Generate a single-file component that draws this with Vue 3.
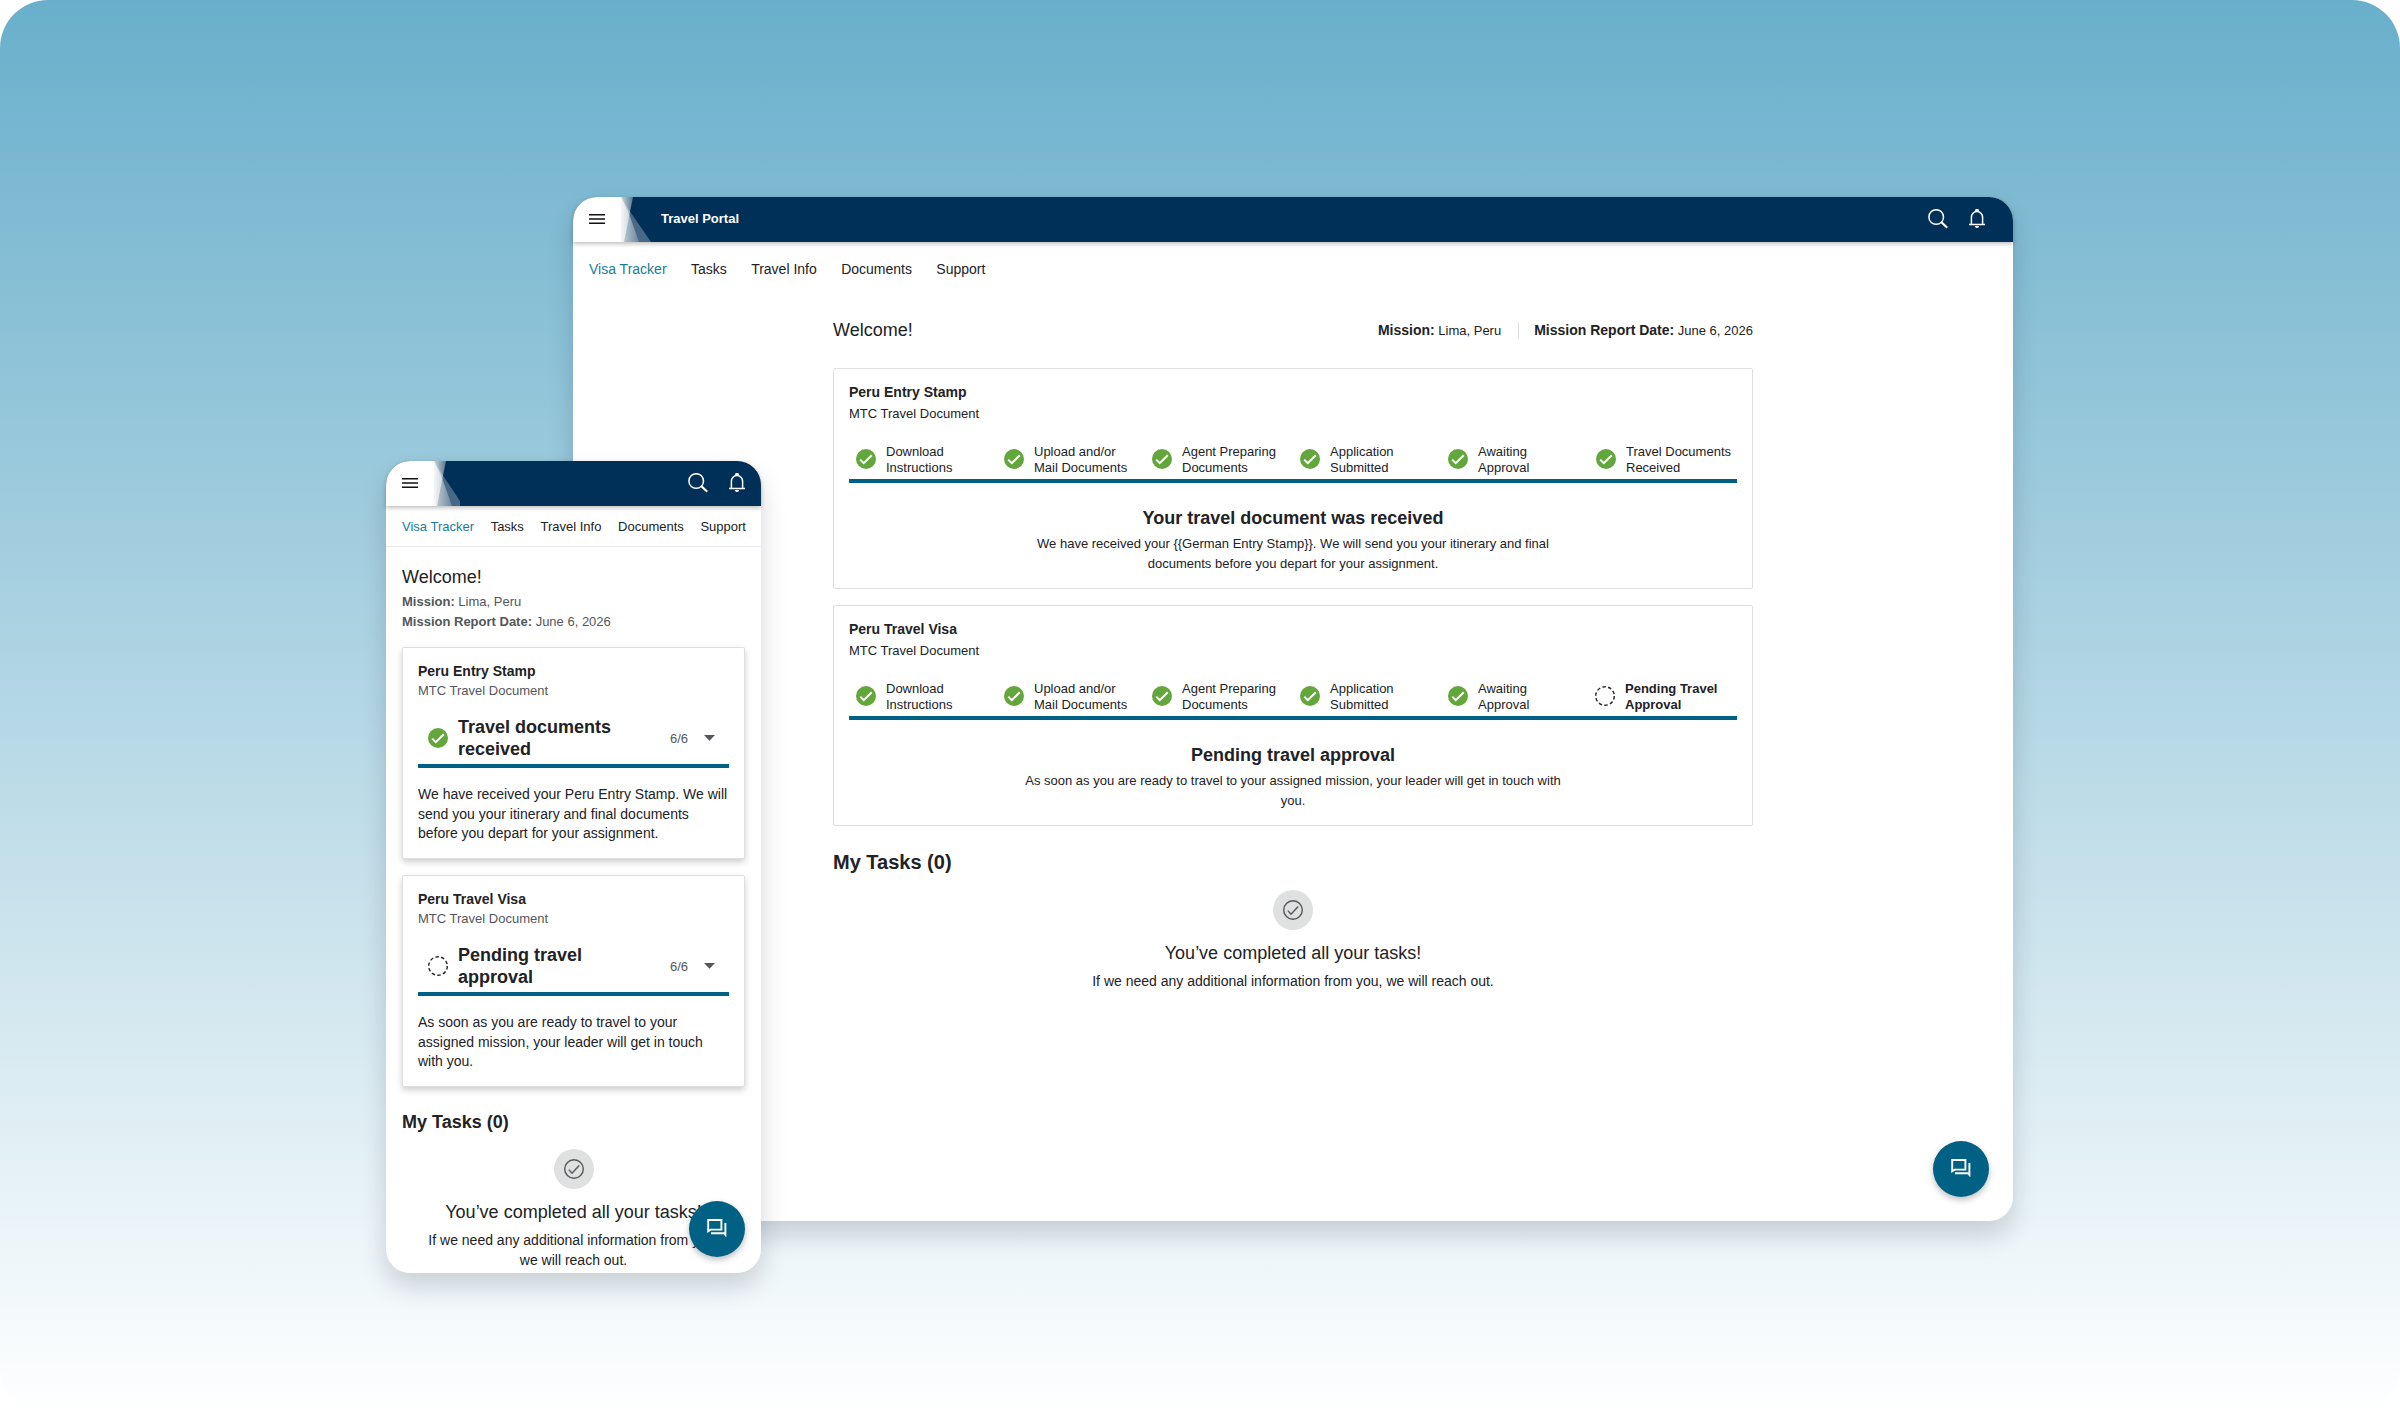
<template>
  <div class="stage">
    <section class="window desktop">
      <header class="topbar">
        <div class="menu"><svg viewBox="0 0 16 10"><path d="M0 .8h16M0 5h16M0 9.2h16" /></svg></div>
        <svg class="glare" viewBox="0 0 30 45">
          <defs>
            <linearGradient id="glare-near"><stop offset="0" stop-color="#fff" stop-opacity=".8" /><stop offset="1" stop-color="#fff" stop-opacity=".35" /></linearGradient>
            <linearGradient id="glare-mid"><stop offset="0" stop-color="#fff" stop-opacity=".7" /><stop offset="1" stop-color="#fff" stop-opacity=".2" /></linearGradient>
          </defs>
          <path d="M0 0h12L3 45H0z" fill="url(#glare-near)" />
          <path d="M0 0l7 14 11 31H0z" fill="url(#glare-mid)" />
          <path d="M0 0l8 13 22 32H0z" fill="#fff" opacity=".28" />
        </svg>
        <strong class="brand">Travel Portal</strong>
        <div class="actions">
          <svg class="search" viewBox="0 0 20 20"><circle cx="8.2" cy="8" r="7.3" /><path class="handle" d="M13.2 13l6 5.8" /></svg>
          <svg class="bell" viewBox="0 0 16 20"><path d="M0 15.5h16M2.4 15V8.2a5.6 5.6 0 0 1 11.2 0V15" /><path class="solid" d="M8 0a1.5 1.5 0 0 1 1.5 2.5h-3A1.5 1.5 0 0 1 8 0zM5.8 17h4.4a2.2 2 0 0 1-4.4 0z" /></svg>
        </div>
      </header>
      <nav class="nav">
        <a v-for="(item, i) in navItems" :key="item" :class="{ active: i === 0 }">{{ item }}</a>
      </nav>
      <main class="content">
        <div class="welcome-row">
          <h1 class="welcome">Welcome!</h1>
          <div class="facts">
            <span><b>Mission:</b> Lima, Peru</span>
            <span class="fact-last"><b>Mission Report Date:</b> June 6, 2026</span>
          </div>
        </div>
        <article v-for="doc in documents" :key="doc.name" class="card">
          <h2 class="card-title">{{ doc.name }}</h2>
          <p class="card-sub">MTC Travel Document</p>
          <ol class="steps">
            <li v-for="step in [...baseSteps, doc.lastStep]" :key="step[0]" :class="{ pending: doc.pending && step === doc.lastStep }">
              <svg class="status" viewBox="0 0 20 20">
                <circle v-if="doc.pending && step === doc.lastStep" class="dashed" cx="10" cy="10" r="9.3" />
                <template v-else>
                  <circle class="done" cx="10" cy="10" r="10" />
                  <path class="tick" d="M4.2 10.6l3.6 3.6 8-8" />
                </template>
              </svg>
              <span>{{ step[0] }}<br>{{ step[1] }}</span>
            </li>
          </ol>
          <h3 class="result">{{ doc.title }}</h3>
          <p class="message">{{ doc.message }}</p>
        </article>
        <h2 class="tasks-title">My Tasks (0)</h2>
        <div class="empty">
          <div class="empty-icon">
            <svg viewBox="0 0 20 20"><circle cx="10" cy="10" r="9.3" /><path d="M4.8 10.6l3.2 3.6 7.2-7.6" /></svg>
          </div>
          <p class="empty-title">You’ve completed all your tasks!</p>
          <p class="empty-text">If we need any additional information from you, we will reach out.</p>
        </div>
      </main>
      <button class="fab" aria-label="Chat">
        <svg viewBox="0 0 20 18"><path d="M1.2 1h13.2v9.6H3.6L1.2 12.2z" /><path d="M4 14.3h13.2l1.2 1.5V4" /></svg>
      </button>
    </section>

    <section class="window phone">
      <header class="topbar">
        <div class="menu"><svg viewBox="0 0 16 10"><path d="M0 .8h16M0 5h16M0 9.2h16" /></svg></div>
        <svg class="glare" viewBox="0 0 30 45">
          <path d="M0 0h12L3 45H0z" fill="url(#glare-near)" />
          <path d="M0 0l7 14 11 31H0z" fill="url(#glare-mid)" />
          <path d="M0 0l8 13 18 27v5H0z" fill="#fff" opacity=".28" />
        </svg>
        <div class="actions">
          <svg class="search" viewBox="0 0 20 20"><circle cx="8.2" cy="8" r="7.3" /><path class="handle" d="M13.2 13l6 5.8" /></svg>
          <svg class="bell" viewBox="0 0 16 20"><path d="M0 15.5h16M2.4 15V8.2a5.6 5.6 0 0 1 11.2 0V15" /><path class="solid" d="M8 0a1.5 1.5 0 0 1 1.5 2.5h-3A1.5 1.5 0 0 1 8 0zM5.8 17h4.4a2.2 2 0 0 1-4.4 0z" /></svg>
        </div>
      </header>
      <nav class="nav">
        <a v-for="(item, i) in navItems" :key="item" :class="{ active: i === 0 }">{{ item }}</a>
      </nav>
      <main class="content">
        <h1 class="welcome">Welcome!</h1>
        <div class="facts">
          <span><b>Mission:</b> Lima, Peru</span>
          <span><b>Mission Report Date:</b> June 6, 2026</span>
        </div>
        <article v-for="doc in documents" :key="doc.name" class="card">
          <h2 class="card-title">{{ doc.name }}</h2>
          <p class="card-sub">MTC Travel Document</p>
          <div class="current">
            <svg class="status" viewBox="0 0 20 20">
              <circle v-if="doc.pending" class="dashed" cx="10" cy="10" r="9.3" />
              <template v-else>
                <circle class="done" cx="10" cy="10" r="10" />
                <path class="tick" d="M4.2 10.6l3.6 3.6 8-8" />
              </template>
            </svg>
            <h3>{{ doc.shortTitle }}</h3>
            <span class="count">6/6</span>
            <svg class="caret" viewBox="0 0 11 6"><path d="M0 0h11L5.5 5.8z" /></svg>
          </div>
          <p class="message">{{ doc.shortMessage }}</p>
        </article>
        <h2 class="tasks-title">My Tasks (0)</h2>
        <div class="empty">
          <div class="empty-icon">
            <svg viewBox="0 0 20 20"><circle cx="10" cy="10" r="9.3" /><path d="M4.8 10.6l3.2 3.6 7.2-7.6" /></svg>
          </div>
          <p class="empty-title">You’ve completed all your tasks!</p>
          <p class="empty-text">If we need any additional information from you, we will reach out.</p>
        </div>
      </main>
      <button class="fab" aria-label="Chat">
        <svg viewBox="0 0 20 18"><path d="M1.2 1h13.2v9.6H3.6L1.2 12.2z" /><path d="M4 14.3h13.2l1.2 1.5V4" /></svg>
      </button>
    </section>
  </div>
</template>

<script setup>
const navItems = ['Visa Tracker', 'Tasks', 'Travel Info', 'Documents', 'Support'];

const baseSteps = [
  ['Download', 'Instructions'],
  ['Upload and/or', 'Mail Documents'],
  ['Agent Preparing', 'Documents'],
  ['Application', 'Submitted'],
  ['Awaiting', 'Approval'],
];

const documents = [
  {
    name: 'Peru Entry Stamp',
    lastStep: ['Travel Documents', 'Received'],
    pending: false,
    title: 'Your travel document was received',
    message: 'We have received your {{German Entry Stamp}}. We will send you your itinerary and final documents before you depart for your assignment.',
    shortTitle: 'Travel documents received',
    shortMessage: 'We have received your Peru Entry Stamp. We will send you your itinerary and final documents before you depart for your assignment.',
  },
  {
    name: 'Peru Travel Visa',
    lastStep: ['Pending Travel', 'Approval'],
    pending: true,
    title: 'Pending travel approval',
    message: 'As soon as you are ready to travel to your assigned mission, your leader will get in touch with you.',
    shortTitle: 'Pending travel approval',
    shortMessage: 'As soon as you are ready to travel to your assigned mission, your leader will get in touch with you.',
  },
];
</script>

<style>
body {
  margin: 0;
  background: #fff;
}
</style>

<style scoped>
.stage {
  position: relative;
  width: 2400px;
  height: 1417px;
  overflow: hidden;
  border-radius: 48px;
  background: linear-gradient(180deg, #69afcb 0%, #fff 100%);
  font-family: "Liberation Sans", Arial, sans-serif;
  color: #212225;
}

h1, h2, h3, p, ol {
  margin: 0;
  padding: 0;
}

svg {
  display: block;
  flex: none;
  fill: none;
}

.window {
  position: absolute;
  display: flex;
  flex-direction: column;
  background: #fff;
  border-radius: 24px;
  box-shadow: 0 14px 26px rgba(0, 15, 35, 0.16);
}

.desktop {
  left: 573px;
  top: 197px;
  width: 1440px;
  height: 1024px;
}

.phone {
  left: 386px;
  top: 461px;
  width: 375px;
  height: 812px;
}

/* top bar */
.topbar {
  display: flex;
  flex: none;
  align-items: center;
  height: 45px;
  overflow: hidden;
  background: #003057;
  border-radius: 24px 24px 0 0;
  box-shadow: 0 2px 4px rgba(0, 0, 0, 0.25);
}

.menu {
  box-sizing: border-box;
  display: flex;
  align-items: center;
  justify-content: center;
  width: 48px;
  height: 45px;
  padding-bottom: 1px;
  background: #fff;
}

.menu svg {
  width: 16px;
  height: 10px;
  stroke: #111;
  stroke-width: 1.5;
}

.glare {
  width: 30px;
  height: 45px;
}

.brand {
  margin-left: 10px;
  padding-bottom: 2px;
  color: #fff;
  font-size: 13px;
  line-height: 20px;
}

.actions {
  display: flex;
  align-items: center;
  gap: 21px;
  margin-left: auto;
  padding: 0 28px 1px 0;
}

.phone .actions {
  padding-right: 16px;
}

.actions svg {
  height: 20px;
  stroke: #fff;
  stroke-width: 1.5;
}

.search {
  width: 20px;
}

.bell {
  width: 16px;
}

.actions .handle {
  stroke-width: 2.2;
}

.actions .solid {
  fill: #fff;
  stroke: none;
}

/* navigation */
.nav {
  display: flex;
  flex: none;
  align-items: center;
  gap: 24.4px;
  height: 54px;
  padding: 0 16px;
  font-size: 14px;
}

.phone .nav {
  justify-content: space-between;
  gap: 0;
  height: 40px;
  padding-right: 15px;
  border-bottom: 1px solid #ececed;
  font-size: 13px;
}

.nav .active {
  color: #177c9c;
}

/* content */
.desktop .content {
  width: 920px;
  margin: 22px auto 0;
}

.phone .content {
  padding: 18px 16px 0;
}

.welcome-row {
  display: flex;
  align-items: center;
  justify-content: space-between;
  height: 24px;
  margin-bottom: 26px;
}

.welcome {
  font-size: 18px;
  font-weight: 400;
  line-height: 24px;
}

.facts {
  display: flex;
  font-size: 13px;
  line-height: 16px;
}

.desktop .facts b {
  font-size: 14px;
}

.fact-last {
  margin-left: 17px;
  padding-left: 15px;
  border-left: 1px solid #dedfdf;
}

.phone .facts {
  flex-direction: column;
  margin: 3px 0 15px;
  color: #53575b;
  line-height: 20px;
}

.card {
  box-sizing: border-box;
  height: 221px;
  margin-bottom: 16px;
  padding: 13px 15px 0;
  border: 1px solid #dedfdf;
  border-radius: 2px;
  background: #fff;
}

.phone .card {
  height: 212px;
  box-shadow: 0 3px 6px rgba(0, 0, 0, 0.2);
}

.card-title {
  font-size: 14px;
  line-height: 20px;
}

.card-sub {
  margin-top: 2px;
  font-size: 13px;
  line-height: 20px;
}

.phone .card-sub {
  margin-top: 0;
  color: #53575b;
}

.steps {
  display: grid;
  grid-template-columns: repeat(6, 148px);
  margin-top: 20px;
  padding-bottom: 3px;
  border-bottom: 4px solid #006184;
  list-style: none;
}

.steps li {
  display: flex;
  align-items: center;
  gap: 10px;
  padding-left: 7px;
  font-size: 13px;
  line-height: 16px;
  white-space: nowrap;
}

.steps .pending {
  padding-left: 6px;
  font-weight: 700;
}

.status {
  width: 20px;
  height: 20px;
}

.steps .status {
  margin-bottom: 2px;
}

.done {
  fill: #63a63c;
}

.tick {
  stroke: #fff;
  stroke-width: 2;
}

.dashed {
  stroke: #212225;
  stroke-width: 1.4;
  stroke-dasharray: 3.5 2.34;
}

.result {
  margin-top: 23px;
  font-size: 18px;
  line-height: 24px;
  text-align: center;
}

.message {
  width: 544px;
  margin: 4px auto 0;
  font-size: 13px;
  line-height: 20px;
  text-align: center;
}

.phone .message {
  width: auto;
  margin-top: 17px;
  font-size: 14px;
  line-height: 19.6px;
  text-align: left;
}

.current {
  display: flex;
  align-items: center;
  margin-top: 15px;
  padding: 0 14.5px 4px 10px;
  border-bottom: 4px solid #006184;
}

.current h3 {
  width: 170px;
  margin-left: 10px;
  font-size: 18px;
  line-height: 22px;
}

.count {
  margin-left: auto;
  color: #53575b;
  font-size: 13px;
}

.caret {
  width: 11px;
  height: 6px;
  margin-left: 15.5px;
  fill: #53575b;
}

/* tasks */
.tasks-title {
  margin-top: 22px;
  font-size: 20px;
  line-height: 28px;
}

.phone .tasks-title {
  margin-top: 23px;
  font-size: 18px;
  line-height: 24px;
}

.empty {
  display: flex;
  flex-direction: column;
  align-items: center;
  margin-top: 14px;
  text-align: center;
}

.phone .empty {
  margin-top: 15px;
}

.empty-icon {
  display: flex;
  align-items: center;
  justify-content: center;
  width: 40px;
  height: 40px;
  border-radius: 50%;
  background: #dfe1e1;
}

.empty-icon svg {
  width: 20px;
  height: 20px;
  stroke: #53575b;
  stroke-width: 1.4;
}

.empty-title {
  margin-top: 11px;
  font-size: 18px;
  line-height: 24px;
}

.empty-text {
  margin-top: 7px;
  font-size: 14px;
  line-height: 19.6px;
}

.phone .empty-text {
  width: 300px;
}

.fab {
  position: absolute;
  right: 24px;
  bottom: 24px;
  display: flex;
  align-items: center;
  justify-content: center;
  width: 56px;
  height: 56px;
  padding: 0 0 2px;
  border: 0;
  border-radius: 50%;
  background: #006184;
  box-shadow: 0 3px 6px rgba(0, 0, 0, 0.25);
}

.phone .fab {
  right: 16px;
  bottom: 16px;
}

.fab svg {
  width: 20px;
  height: 18px;
  stroke: #fff;
  stroke-width: 1.9;
}
</style>
